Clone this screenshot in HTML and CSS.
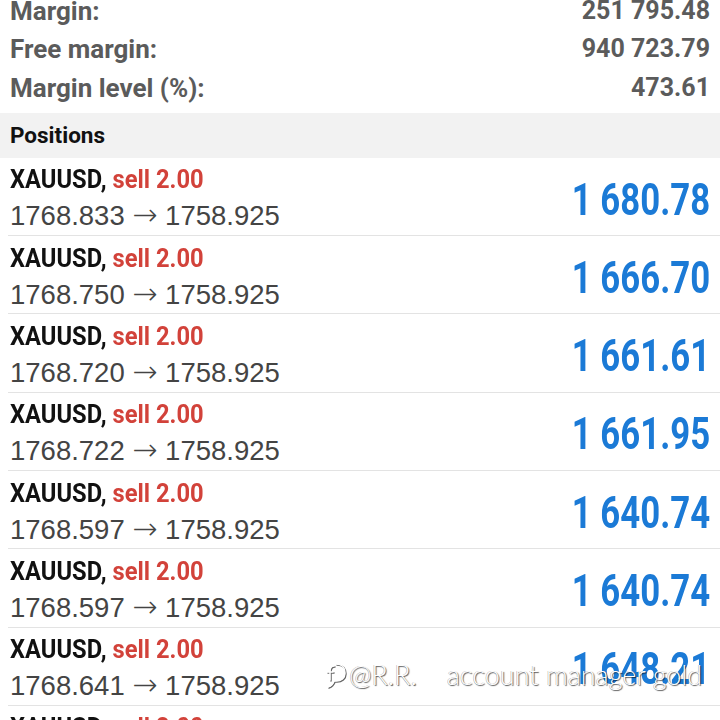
FILE: index.html
```html
<!DOCTYPE html>
<html lang="en">
<head>
    <meta charset="UTF-8">
    <title>Trade - Positions</title>
    <link rel="stylesheet" href="styles.css">
</head>
<body>
    <!-- account summary -->
    <div class="summary">
        <div class="summary-row"><span class="label">Margin:</span><span class="value">251 795.48</span></div>
        <div class="summary-row"><span class="label">Free margin:</span><span class="value">940 723.79</span></div>
        <div class="summary-row"><span class="label">Margin level (%):</span><span class="value">473.61</span></div>
    </div>

    <div class="section-title">Positions</div>

    <!-- open positions -->
    <div class="positions">
        <div class="position">
            <div class="pos-info">
                <div class="pos-symbol"><span class="squeeze">XAUUSD, <span class="sell">sell 2.00</span></span></div>
                <div class="pos-prices">1768.833 <span class="arrow">&rarr;</span> 1758.925</div>
            </div>
            <div class="pos-profit">1 680.78</div>
        </div>
        <div class="position">
            <div class="pos-info">
                <div class="pos-symbol"><span class="squeeze">XAUUSD, <span class="sell">sell 2.00</span></span></div>
                <div class="pos-prices">1768.750 <span class="arrow">&rarr;</span> 1758.925</div>
            </div>
            <div class="pos-profit">1 666.70</div>
        </div>
        <div class="position">
            <div class="pos-info">
                <div class="pos-symbol"><span class="squeeze">XAUUSD, <span class="sell">sell 2.00</span></span></div>
                <div class="pos-prices">1768.720 <span class="arrow">&rarr;</span> 1758.925</div>
            </div>
            <div class="pos-profit">1 661.61</div>
        </div>
        <div class="position">
            <div class="pos-info">
                <div class="pos-symbol"><span class="squeeze">XAUUSD, <span class="sell">sell 2.00</span></span></div>
                <div class="pos-prices">1768.722 <span class="arrow">&rarr;</span> 1758.925</div>
            </div>
            <div class="pos-profit">1 661.95</div>
        </div>
        <div class="position">
            <div class="pos-info">
                <div class="pos-symbol"><span class="squeeze">XAUUSD, <span class="sell">sell 2.00</span></span></div>
                <div class="pos-prices">1768.597 <span class="arrow">&rarr;</span> 1758.925</div>
            </div>
            <div class="pos-profit">1 640.74</div>
        </div>
        <div class="position">
            <div class="pos-info">
                <div class="pos-symbol"><span class="squeeze">XAUUSD, <span class="sell">sell 2.00</span></span></div>
                <div class="pos-prices">1768.597 <span class="arrow">&rarr;</span> 1758.925</div>
            </div>
            <div class="pos-profit">1 640.74</div>
        </div>
        <div class="position">
            <div class="pos-info">
                <div class="pos-symbol"><span class="squeeze">XAUUSD, <span class="sell">sell 2.00</span></span></div>
                <div class="pos-prices">1768.641 <span class="arrow">&rarr;</span> 1758.925</div>
            </div>
            <div class="pos-profit">1 648.21</div>
        </div>
        <div class="position">
            <div class="pos-info">
                <div class="pos-symbol"><span class="squeeze">XAUUSD, <span class="sell">sell 2.00</span></span></div>
                <div class="pos-prices">1768.641 <span class="arrow">&rarr;</span> 1758.925</div>
            </div>
            <div class="pos-profit">1 648.21</div>
        </div>
    </div>

    <!-- watermark over the list -->
    <div class="watermark">
        <svg class="wm-icon" viewBox="0 0 22 30" width="22" height="30">
            <path d="M10 6 C7 6 6 8 6 11 L6 20" fill="none" stroke="#fff" stroke-width="1.5" stroke-linecap="round"/>
            <path d="M3 12 L9 12" fill="none" stroke="#fff" stroke-width="1.5" stroke-linecap="round"/>
            <path d="M12 4 C18 4 21 8 21 13 C21 18 17 21 12 21 L10 21 C9 24 7 26 4 27" fill="none" stroke="#fff" stroke-width="1.5" stroke-linecap="round"/>
        </svg>
        <span>@R.R.</span>
        <span class="wm-gap">account manager gold</span>
    </div>
</body>
</html>
```

FILE: styles.css
```css
body {
    margin: 0;
    width: 720px;
    height: 720px;
    overflow: hidden;
    position: relative;
    background: #fff;
    font-family: 'Roboto', 'Liberation Sans', sans-serif;
}

/* account summary */
.summary {
    margin-top: -8px;
    padding: 0 10px 6px 10px;
}

.summary-row {
    display: flex;
    justify-content: space-between;
    align-items: center;
    height: 38.3px;
    line-height: 38.3px;
    font-size: 26px;
    font-weight: bold;
    color: #5b5b5b;
}

.summary-row .value {
    font-size: 25px;
}

/* section header */
.section-title {
    height: 45px;
    line-height: 45px;
    padding-left: 10px;
    background: #f2f2f2;
    font-size: 22.5px;
    font-weight: bold;
    color: #111;
}

/* positions list */
.position {
    display: flex;
    justify-content: space-between;
    align-items: center;
    height: 77.3px;
    margin-left: 8px;
    padding-right: 10px;
    border-bottom: 1px solid #e3e3e3;
}

.pos-info {
    align-self: flex-start;
    padding: 6.5px 0 0 2px;
}

.pos-symbol {
    font-size: 25.5px;
    font-weight: bold;
    color: #111;
    line-height: 30px;
    white-space: nowrap;
}

/* the app uses a condensed face */
.squeeze {
    display: inline-block;
    transform: scaleX(0.93);
    transform-origin: left center;
}

.sell {
    color: #d2423a;
}

.pos-prices {
    margin-top: 4px;
    font-family: 'Liberation Sans', sans-serif;
    font-size: 27.5px;
    color: #444;
    line-height: 34px;
    white-space: nowrap;
}

.arrow {
    font-family: 'DejaVu Sans', sans-serif;
    font-weight: 200;
    font-size: 30px;
}

.pos-profit {
    margin-top: 6px;
    font-size: 44px;
    font-weight: bold;
    color: #1b7ad6;
    transform: scaleX(0.79);
    transform-origin: right center;
    white-space: nowrap;
}

/* watermark */
.watermark {
    position: absolute;
    left: 324px;
    top: 658px;
    display: flex;
    align-items: center;
    white-space: nowrap;
    font-family: 'Lato', sans-serif;
    font-weight: 300;
    font-size: 27px;
    color: #fff;
    text-shadow: 1px 1px 1px rgba(0, 0, 0, 0.65), -0.5px -0.5px 0 rgba(0, 0, 0, 0.35);
}

.wm-icon {
    margin-right: 3px;
    filter: drop-shadow(1px 1px 0.5px rgba(0, 0, 0, 0.6));
}

.wm-gap {
    margin-left: 30px;
}
```
